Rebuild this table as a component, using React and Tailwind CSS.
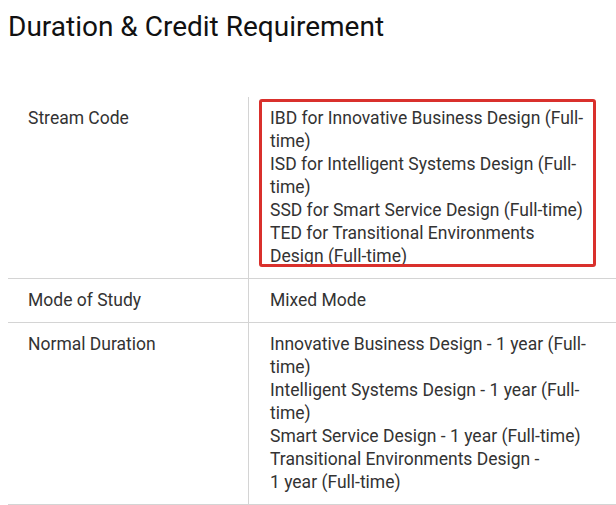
import React from 'react';

const rows = [
  {
    label: 'Stream Code',
    lines: [
      'IBD for Innovative Business Design (Full-time)',
      'ISD for Intelligent Systems Design (Full-time)',
      'SSD for Smart Service Design (Full-time)',
      'TED for Transitional Environments Design (Full-time)',
    ],
    highlight: true,
  },
  { label: 'Mode of Study', lines: ['Mixed Mode'] },
  {
    label: 'Normal Duration',
    lines: [
      'Innovative Business Design - 1\u00a0year (Full-time)',
      'Intelligent Systems Design - 1\u00a0year (Full-time)',
      'Smart Service Design - 1\u00a0year (Full-time)',
      'Transitional Environments Design - 1\u00a0year (Full-time)',
    ],
  },
];

export default function App() {
  return (
    <div className="w-[616px] h-[505px] overflow-hidden bg-white font-['Roboto',sans-serif]">
      <h2 className="pl-2 pt-[9px] text-[28px] leading-[36px] text-[#111]">Duration &amp; Credit Requirement</h2>
      <div className="ml-2 mt-[52px] text-[17.5px] leading-[23px] text-[#333]">
        {rows.map((row, i) => (
          <div key={i} className={`flex ${i > 0 ? 'border-t border-[#d4d4d4]' : ''} ${i === rows.length - 1 ? 'border-b border-[#d4d4d4]' : ''}`}>
            <div className="w-[241px] shrink-0 border-r border-[#d4d4d4] pl-5 pr-4 pt-[10px] pb-[10px]">{row.label}</div>
            <div className="relative flex-1 pl-[21px] pr-[28px] pt-[10px] pb-[10px]">
              {row.lines.map((l, j) => (
                <div key={j}>{l}</div>
              ))}
              {row.highlight && (
                <div className="absolute left-[10px] top-[2px] w-[337px] h-[168px] border-[3px] border-[#d9302c] rounded-[3px] pointer-events-none" />
              )}
            </div>
          </div>
        ))}
      </div>
    </div>
  );
}
